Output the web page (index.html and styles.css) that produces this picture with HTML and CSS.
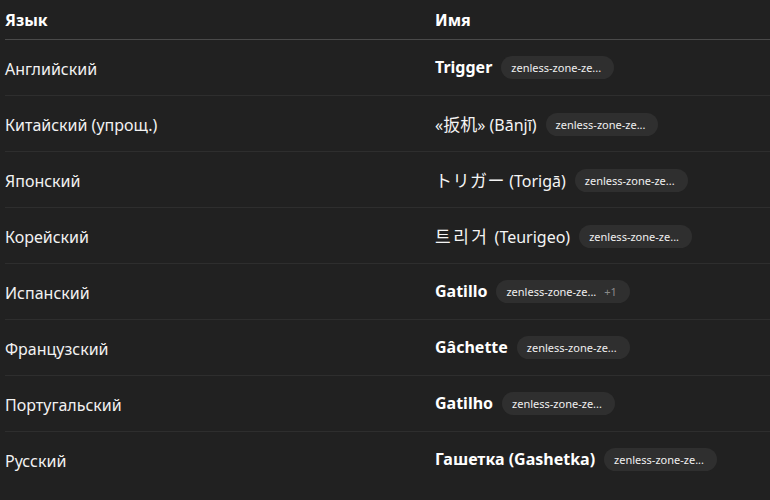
FILE: index.html
```html
<!DOCTYPE html>
<html lang="ru">
<head>
<meta charset="utf-8">
<link rel="stylesheet" href="styles.css">
</head>
<body>
<table class="langs">
  <thead>
    <tr><th class="c1">Язык</th><th class="c2">Имя</th></tr>
  </thead>
  <tbody>
    <tr><td class="c1">Английский</td><td class="c2"><span class="name b">Trigger</span><span class="tag">zenless-zone-ze...</span></td></tr>
    <tr><td class="c1">Китайский (упрощ.)</td><td class="c2"><span class="name">«<span class="cjk sc">扳机</span>» (Bānjī)</span><span class="tag">zenless-zone-ze...</span></td></tr>
    <tr><td class="c1">Японский</td><td class="c2"><span class="name"><span class="cjk jp">トリガー</span> (Torigā)</span><span class="tag">zenless-zone-ze...</span></td></tr>
    <tr><td class="c1">Корейский</td><td class="c2"><span class="name"><span class="cjk kr">트리거</span> (Teurigeo)</span><span class="tag">zenless-zone-ze...</span></td></tr>
    <tr><td class="c1">Испанский</td><td class="c2"><span class="name b">Gatillo</span><span class="tag">zenless-zone-ze...<span class="more">+1</span></span></td></tr>
    <tr><td class="c1">Французский</td><td class="c2"><span class="name b">Gâchette</span><span class="tag">zenless-zone-ze...</span></td></tr>
    <tr><td class="c1">Португальский</td><td class="c2"><span class="name b">Gatilho</span><span class="tag">zenless-zone-ze...</span></td></tr>
    <tr><td class="c1">Русский</td><td class="c2"><span class="name b">Гашетка (Gashetka)</span><span class="tag">zenless-zone-ze...</span></td></tr>
  </tbody>
</table>
</body>
</html>
```
FILE: styles.css
```css
html, body {
  margin: 0;
  padding: 0;
  background: #212121;
}
body {
  font-family: "Noto Sans", "Open Sans", "Noto Sans CJK SC", "Noto Sans CJK JP", "Noto Sans CJK KR", sans-serif;
  color: #f2f2f2;
  font-size: 16px;
  padding-left: 5px;
}
.langs {
  border-collapse: collapse;
  width: 765px;
  table-layout: fixed;
}
.langs th, .langs td {
  padding: 0;
  text-align: left;
  vertical-align: middle;
}
.langs th {
  height: 39px;
  font-weight: 700;
  color: #ffffff;
  border-bottom: 1px solid #4a4a4a;
}
.langs td {
  height: 53px;
  padding-top: 2px;
  border-bottom: 1px solid #2e2e2e;
}
.langs tbody tr:last-child td {
  border-bottom: none;
}
.c1 { width: 430px; }
.c2 { white-space: nowrap; }
.name { color: #f4f4f4; }
.name.b { font-weight: 700; color: #ffffff; }
.cjk { font-size: 17px; }
.cjk.sc { font-family: "Noto Sans CJK SC", sans-serif; }
.cjk.jp { font-family: "Noto Sans CJK JP", sans-serif; letter-spacing: 0.5px; }
.cjk.kr { font-family: "Noto Sans CJK KR", sans-serif; letter-spacing: 2.5px; margin-right: 1px; }
.tag {
  display: inline-block;
  margin-left: 9px;
  height: 23px;
  line-height: 23px;
  padding: 0 13px 0 10px;
  border-radius: 12px;
  background: #2f2f2f;
  font-size: 11px;
  color: #f0f0f0;
  vertical-align: middle;
  position: relative;
  top: -2px;
}
.more {
  color: #8a8a8a;
  margin-left: 8px;
}
```
